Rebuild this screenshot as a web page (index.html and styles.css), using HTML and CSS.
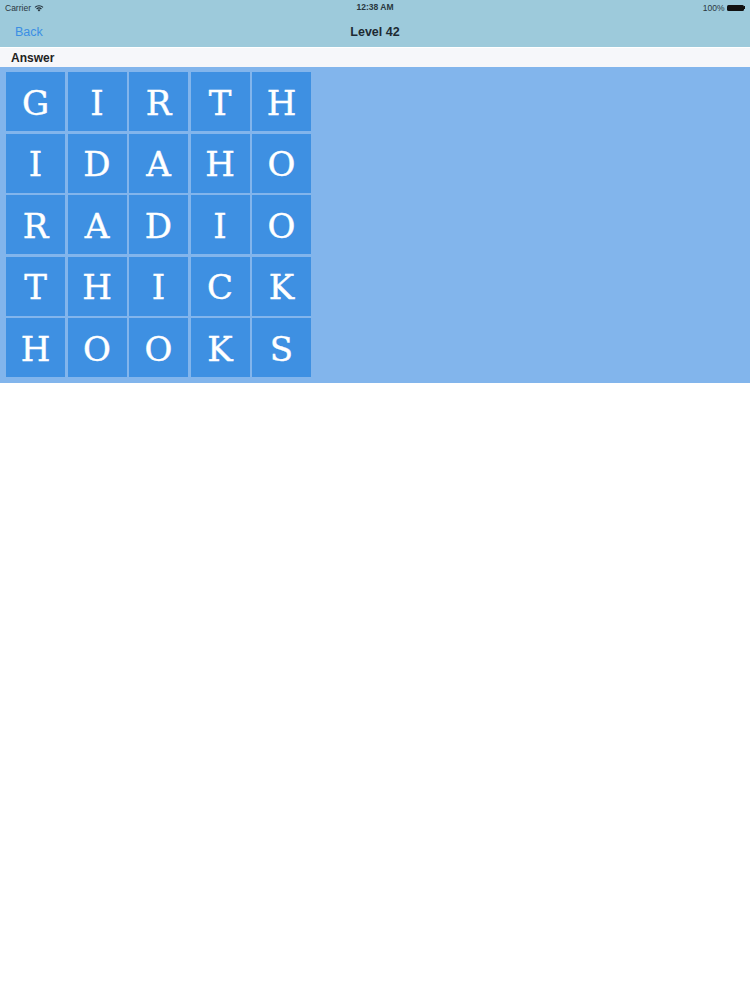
FILE: index.html
```html
<!DOCTYPE html>
<html>
<head>
<meta charset="utf-8">
<link rel="stylesheet" href="styles.css">
</head>
<body>
<div class="top">
  <div class="status">
    <div class="status-left">Carrier
      <svg class="wifi" width="10" height="8" viewBox="0 0 10 8"><path d="M5 7.5 L3.6 6 A2 2 0 0 1 6.4 6 Z" fill="#1d2a33"/><path d="M2.2 4.6 A4 4 0 0 1 7.8 4.6 L7 5.4 A2.9 2.9 0 0 0 3 5.4 Z" fill="#1d2a33"/><path d="M0.6 3 A6.3 6.3 0 0 1 9.4 3 L8.6 3.8 A5.2 5.2 0 0 0 1.4 3.8 Z" fill="#1d2a33"/></svg>
    </div>
    <div class="status-time">12:38 AM</div>
    <div class="status-right">100%
      <span class="battery"></span><span class="battery-tip"></span>
    </div>
  </div>
  <div class="nav">
    <div class="back">Back</div>
    <div class="title">Level 42</div>
    <div class="nav-spacer"></div>
  </div>
</div>
<div class="answer">Answer</div>
<div class="board">
  <div class="grid">
    <div class="tile">G</div><div class="tile">I</div><div class="tile">R</div><div class="tile">T</div><div class="tile">H</div>
    <div class="tile">I</div><div class="tile">D</div><div class="tile">A</div><div class="tile">H</div><div class="tile">O</div>
    <div class="tile">R</div><div class="tile">A</div><div class="tile">D</div><div class="tile">I</div><div class="tile">O</div>
    <div class="tile">T</div><div class="tile">H</div><div class="tile">I</div><div class="tile">C</div><div class="tile">K</div>
    <div class="tile">H</div><div class="tile">O</div><div class="tile">O</div><div class="tile">K</div><div class="tile">S</div>
  </div>
</div>
</body>
</html>
```
FILE: styles.css
```css
html, body {
  margin: 0;
  padding: 0;
  background: #ffffff;
  font-family: "Liberation Sans", Arial, sans-serif;
}
.top {
  background: #9dcadb;
  height: 47px;
  display: flex;
  flex-direction: column;
}
.status {
  height: 15px;
  display: flex;
  align-items: center;
  justify-content: space-between;
  padding: 0 5px;
  font-size: 8.5px;
  color: #2a3740;
  position: relative;
}
.status-left {
  display: flex;
  align-items: center;
  gap: 3px;
}
.status-time {
  position: absolute;
  left: 0;
  right: 0;
  text-align: center;
  font-weight: bold;
  top: 2px;
}
.status-right {
  display: flex;
  align-items: center;
  gap: 2px;
}
.battery {
  display: inline-block;
  width: 17px;
  height: 6px;
  background: #111;
  border-radius: 1.5px;
}
.battery-tip {
  display: inline-block;
  width: 1.5px;
  height: 3px;
  background: #111;
  margin-left: -2px;
}
.nav {
  flex: 1;
  display: flex;
  align-items: center;
  justify-content: space-between;
  padding: 1px 15px 0 15px;
}
.back {
  color: #3b8ee4;
  font-size: 12.5px;
  width: 60px;
}
.title {
  font-weight: bold;
  font-size: 12.5px;
  color: #1d2a33;
}
.nav-spacer {
  width: 60px;
}
.answer {
  margin-top: 1px;
  height: 19px;
  line-height: 20px;
  background: #f6f7fa;
  padding-left: 11px;
  font-size: 12px;
  font-weight: bold;
  color: #222;
}
.board {
  background: #82b5ec;
  padding: 5px 6px 6px 6px;
}
.grid {
  display: grid;
  grid-template-columns: repeat(5, 59px);
  grid-auto-rows: 59px;
  gap: 2.5px;
}
.tile {
  background: #3e90e2;
  color: #ffffff;
  font-family: "DejaVu Serif", "Liberation Serif", serif;
  font-size: 34px;
  -webkit-text-stroke: 0.4px #ffffff;
  display: flex;
  align-items: center;
  justify-content: center;
  padding-top: 2px;
  box-sizing: border-box;
}
```
